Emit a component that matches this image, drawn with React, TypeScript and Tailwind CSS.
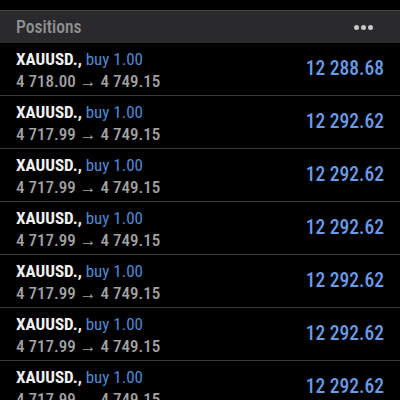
const rows = [
  { open: '4 718.00', close: '4 749.15', profit: '12 288.68' },
  { open: '4 717.99', close: '4 749.15', profit: '12 292.62' },
  { open: '4 717.99', close: '4 749.15', profit: '12 292.62' },
  { open: '4 717.99', close: '4 749.15', profit: '12 292.62' },
  { open: '4 717.99', close: '4 749.15', profit: '12 292.62' },
  { open: '4 717.99', close: '4 749.15', profit: '12 292.62' },
  { open: '4 717.99', close: '4 749.15', profit: '12 292.62' },
];

export default function App() {
  return (
    <div className="w-[400px] h-[400px] overflow-hidden bg-black font-['Roboto_Condensed','Roboto',sans-serif]">
      <div className="h-[10px]" />
      {/* Section header */}
      <div className="h-[33px] bg-[#2a2a2c] border-t border-[#444446] flex items-center justify-between pl-4 pr-[27px]">
        <span className="text-[17.5px] font-medium text-[#929294]">Positions</span>
        <div className="flex gap-[2px]">
          <span className="w-[5px] h-[5px] rounded-full bg-[#c8c8c8]" />
          <span className="w-[5px] h-[5px] rounded-full bg-[#c8c8c8]" />
          <span className="w-[5px] h-[5px] rounded-full bg-[#c8c8c8]" />
        </div>
      </div>

      {/* Position rows */}
      {rows.map((r, i) => (
        <div
          key={i}
          className="h-[53px] border-b border-[#3a3a3c] flex items-center justify-between pl-4 pr-[16px]"
        >
          <div className="flex flex-col leading-[22px] pt-[1px]">
            <div className="text-[17px]">
              <span className="font-bold text-[#f2f2f2]">XAUUSD.,</span>
              <span className="text-[#4f8ad6]"> buy 1.00</span>
            </div>
            <div className="text-[17px] font-medium text-[#a3a3a3]">
              {r.open} → {r.close}
            </div>
          </div>
          <span className="text-[19.5px] font-medium text-[#6a9be6]">{r.profit}</span>
        </div>
      ))}
    </div>
  );
}
